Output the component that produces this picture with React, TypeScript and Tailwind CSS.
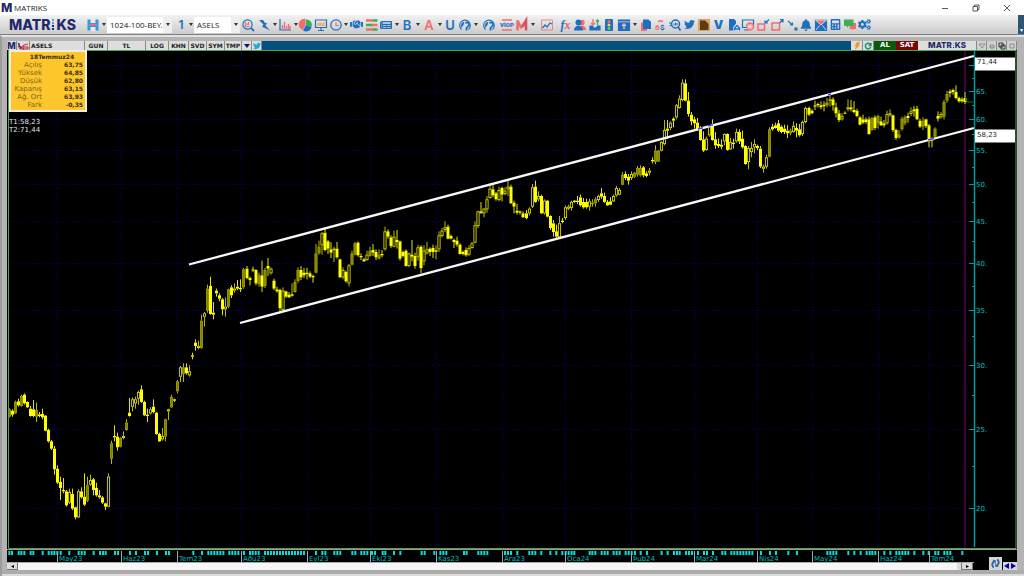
import type { ReactNode } from 'react'
import { FaTwitter, FaHandshake, FaBell, FaCalculator, FaNewspaper, FaCogs } from 'react-icons/fa'

const BLUE = '#1f6fc0'
const RED = '#f26d6d'
const GREEN = '#2fb457'
const NAVY = '#23286b'

// each bar: high, body top, body bottom, low, style (f = filled, h = hollow, d = dim)
// values are in thirds of a unit below the segment's base line
const segments = [
  {
    base: 380,
    bars:
      '85 88 110 112 d,88 92 104 110 f,62 66 100 102 d,56 64 76 80 f,44 48 78 80 d,40 44 70 74 f,64 66 82 84 f,78 86 108 110 f,60 88 108 112 f,68 90 110 126 d,96 103 108 112 f,86 102 112 118 f,105 107 152 154 f,146 150 184 188 f,180 184 206 210 f,198 206 268 284 f,256 266 308 312 f,290 306 324 360 f,294 330 334 340 f,330 334 376 380 f,326 336 368 372 h,326 342 386 390 f,380 382 412 418 f,328 334 412 414 h,322 334 352 356 f,280 350 374 378 f,290 316 362 366 d,284 300 314 318 h,294 298 330 346 f,308 324 346 350 f,330 346 352 356 f,348 352 368 372 f,368 370 380 390 f,280 290 380 382 h,182 190 236 252 d,136 168 172 184 f,158 170 202 212 f,172 174 200 202 d,154 168 174 178 h,118 128 150 152 d,54 98 108 110 f,52 58 80 94 h,50 58 70 86 h,32 36 56 74 h,16 28 66 68 f,62 66 106 108 f,86 104 108 126 f,82 88 100 104 h,58 80 96 100 f,96 98 162 164 f,158 162 184 186 f,144 168 178 182 h,116 118 170 184 d,86 88 94 120 h,44 50 82 84 d,56 58 62 66 f,0 4 34 40 d',
  },
  {
    base: 220,
    bars:
      '438 442 470 486 h,430 442 462 486 d,430 442 460 464 f,436 454 466 470 h,398 406 410 418 f,358 368 378 392 f,362 378 384 388 h,284 302 384 386 d,276 280 290 320 h,194 206 272 278 d,170 198 282 284 f,246 278 284 298 f,206 212 220 230 f,220 226 236 244 f,234 238 268 286 f,232 260 268 290 h,206 208 260 264 d,196 202 226 234 f,190 206 212 218 h,180 200 206 210 f,178 204 208 216 f,144 148 202 206 d,138 146 174 178 f,170 174 180 196 f,140 148 152 156 f,148 150 190 196 f,158 166 192 200 d,122 166 200 216 f,144 150 198 204 d,114 138 146 168 f,142 146 160 164 h,176 182 206 210 f,200 208 214 218 f,206 210 264 274 f,202 212 270 276 h,212 214 230 234 f,216 224 232 234 f,190 222 228 230 h,178 186 216 218 d,142 150 184 188 d,138 150 172 180 f,144 158 166 174 f,144 158 162 178 f,154 160 170 174 f,164 168 172 188 f,72 100 158 160 d,62 80 100 104 d,36 40 76 104 h,26 38 90 94 f,60 64 86 102 f,66 88 98 114 f,80 86 90 126 h,66 86 112 116 f,116 118 172 174 f,142 150 172 178 h,152 156 184 188 f,132 136 190 200 h,92 100 134 136 d,66 70 104 106 d,64 68 106 110 f,100 108 112 120 f,114 118 124 126 f,92 104 120 122 h,80 92 108 110 d,72 90 98 108 f,88 96 112 120 f,88 104 116 118 d,90 102 106 112 f,20 34 88 92 h,28 34 50 56 f,46 52 78 84 f,32 50 80 82 h,30 60 66 86 f,62 64 116 122 f,92 96 108 112 f,88 92 138 140 f,98 100 138 142 h,60 104 110 124 f,98 108 138 146 f,74 82 110 122 h,76 80 144 160 f,76 92 124 136 h,66 88 100 104 h,82 86 96 108 f,74 84 96 114 f,76 90 96 118 h,34 46 88 96 h',
  },
  {
    base: 160,
    bars:
      '204 212 228 232 h,184 202 210 216 h,194 200 236 238 f,224 228 236 238 f,236 240 246 264 f,230 242 254 260 f,250 254 282 284 f,272 276 282 286 f,262 270 286 290 f,256 264 284 288 h,246 250 264 266 h,184 196 248 250 h,152 154 198 204 h,126 154 160 160 f,144 146 160 172 h,108 118 148 158 h,70 86 114 116 h,70 88 106 112 f,96 100 118 122 f,80 90 120 124 h,80 84 104 124 f,82 92 102 106 h,60 80 88 108 h,74 80 130 132 f,122 128 140 160 f,132 152 158 164 f,152 154 158 164 f,154 160 172 174 f,150 160 174 178 f,142 146 160 166 h,72 82 140 144 h,62 80 126 128 f,94 108 118 124 h,104 108 160 162 f,118 122 160 164 h,120 122 170 172 f,166 168 204 210 f,180 190 216 230 f,194 214 230 234 f,168 190 232 234 h,174 182 186 190 f,136 142 174 180 h,134 140 146 150 h,122 126 144 152 h,120 122 126 128 f,108 122 126 132 f,104 112 136 140 f,114 126 142 146 f,116 126 142 146 f,116 124 140 152 h,118 128 132 140 d,112 118 130 140 d,104 108 120 126 h,84 100 110 116 f,98 108 126 128 f,120 126 136 138 f,112 124 134 136 f,104 108 124 126 h,78 84 106 110 h,84 90 104 106 h,36 44 74 76 d,34 42 54 60 f,42 50 62 74 f,34 42 54 60 h,36 38 50 54 d,18 24 44 50 d,16 24 46 50 d,18 22 46 52 f,34 40 48 52 f,24 32 38 46 h',
  },
  {
    base: 70,
    bars:
      '262 270 274 280 f,226 242 276 282 d,240 242 274 276 d,214 216 242 244 h,150 180 222 226 h,150 176 182 206 f,154 158 174 180 h,142 146 152 172 f,102 106 142 148 h,76 86 114 116 h,28 38 90 94 h,28 40 92 94 f,66 92 132 140 f,126 134 154 166 f,140 148 160 176 f,144 158 178 182 f,168 174 210 212 f,184 208 242 246 f,200 206 240 242 h,166 168 196 200 h,148 162 210 212 f,186 208 226 236 f,206 222 228 234 f,208 224 230 238 f,190 192 214 226 h,190 192 240 242 f,204 216 238 240 h,206 218 222 236 f,176 186 214 218 h,178 186 214 222 f,182 206 232 236 f,226 228 282 284 f,228 234 276 298 h,216 234 246 262 h,208 222 232 250 h,224 228 234 240 f,228 236 290 294 f,284 290 296 308 h,254 262 290 296 h,172 178 260 262 d,162 170 178 182 f,158 166 174 176 f,150 160 182 186 f,166 170 186 190 f,164 176 186 192 f,166 182 190 204 f,176 182 190 196 d,154 168 186 188 h,160 174 182 202 f,162 178 196 200 f,152 156 192 198 h,110 114 156 160 h,110 114 134 138 f,118 122 130 132 f,92 106 110 120 f,98 102 106 112 f,94 106 112 118 f,94 104 108 124 f,84 98 106 112 h,74 88 92 110 h,82 88 106 122 f,98 112 130 142 f,120 130 150 156 f,130 138 148 152 h,124 128 130 132 f,88 112 118 124 h,90 112 118 124 f,94 120 126 130 f,116 122 138 142 f,138 142 164 166 f,134 148 158 162 f,142 148 156 162 f,140 148 192 194 f,140 144 180 182 d,136 142 174 180 f,134 138 160 176 d,140 154 166 168 f,150 160 166 172 f,122 132 160 164 h,118 130 136 140 h,134 136 180 186 f,176 180 204 210 f,180 194 202 206 h,140 146 178 182 d,136 142 160 166 d,128 138 144 158 f,112 124 132 138 h,108 118 124 140 f,108 116 148 150 f,146 152 170 174 f,142 152 170 180 d,146 148 168 174 f,162 166 214 232 f,202 206 212 232 f,172 176 200 204 d,124 138 146 154 f,126 132 142 146 h,90 96 140 148 d,62 72 92 98 d,58 64 70 82 f,56 60 66 74 f,46 66 84 88 f,80 84 94 98 f,82 88 94 98 f,66 84 96 102 f',
  },
]

const candles = segments
  .flatMap(s =>
    s.bars.split(',').map(bar => {
      const [high, top, bottom, low, kind] = bar.split(' ')
      const y = (v: string) => s.base + Number(v) / 3
      return { high: y(high), top: y(top), bottom: y(bottom), low: y(low), kind }
    })
  )
  .map((c, i) => ({ ...c, x: (28 + i * 9.016) / 3 }))

// news markers under the chart, thirds of a unit from each start
const markers = [
  { from: 0, at: [28, 36, 56, 64, 73, 92, 100, 128, 146, 155, 163, 172, 182, 208, 236, 245, 254, 281, 300, 309, 317, 345, 354, 390, 408, 435, 444, 471, 498, 507, 580, 606, 625, 634, 643, 652, 661, 670, 688, 697, 706, 715] },
  { from: 240, at: [12, 30, 38, 47, 56, 75, 84, 93, 102, 111, 120, 129, 138, 147, 156, 165, 174, 183, 192, 228, 247, 256, 283, 292, 301, 337, 346, 364, 373, 382, 396, 405, 428, 436, 462, 481, 545, 554, 583, 601, 610, 619, 672, 680, 715, 724, 733, 742, 795, 804, 813, 832, 868, 877, 886, 904, 931, 949, 967] },
  { from: 540, at: [77, 86, 95, 103, 149, 157, 166, 185, 194, 203, 221, 230, 239, 257, 266, 275, 285, 302, 321, 365, 383, 402, 411, 419, 438, 447, 456, 474, 492, 501, 519, 547, 556, 574, 583, 592, 601, 610, 619, 628, 637, 663, 690, 708, 745, 771, 862, 871, 880, 889, 925, 943, 962, 980, 989] },
  { from: 820, at: [157, 166, 193, 211, 229, 238, 247, 256, 265, 283, 310, 326, 346, 355, 373, 382, 391, 427] },
].flatMap(m => m.at.map(v => m.from + v / 3))

const months: [number, string][] = [
  [57, 'May23'], [121, 'Haz23'], [177, 'Tem23'], [241, 'Aðu23'], [307, 'Eyl23'], [370, 'Eki23'], [436, 'Kas23'],
  [502, 'Ara23'], [565, 'Oca24'], [631, 'Þub24'], [694, 'Mar24'], [757, 'Nis24'], [812, 'May24'], [878, 'Haz24'], [929, 'Tem24'],
]

const levels = [70, 65, 60, 55, 50, 45, 40, 35, 30, 25, 20]
const priceY = (p: number) => Math.round(508 - 353.8 * Math.log(p / 20))

const quote = [
  ['Açılış', '63,75'],
  ['Yüksek', '64,85'],
  ['Düşük', '62,80'],
  ['Kapanış', '63,15'],
  ['Ağ. Ort', '63,93'],
  ['Fark', '-0,35'],
]

function Svg({ children }: { children: ReactNode }) {
  return <svg viewBox="0 0 12 12" className="h-3 w-3 overflow-visible" fill="none" stroke={BLUE} strokeWidth="1.2">{children}</svg>
}

function Caret() {
  return <svg viewBox="0 0 4 3" className="h-[3px] w-[4px]" fill="#333"><path d="M0 0h4L2 3z" /></svg>
}

function Glyph({ children, className }: { children: ReactNode; className: string }) {
  return <span className={`font-[Inter,sans-serif] ${className}`}>{children}</span>
}

const globe = (
  <Svg>
    <path d="M2.500 10.500A5.300 5.300 0 1 1 9.500 10.500" strokeWidth="1.200" />
    <path d="M2 8.500C1.500 5 3 3 5.500 2.500 4.500 4 5.500 5.500 4 6.500c-1 .8-.5 2-2 2z" fill={BLUE} stroke="none" />
    <path d="M6.500 4.500c1.500-2 3.500-1 3.500 1S8 7.500 7.500 9v2.500" strokeWidth="1.800" />
  </Svg>
)

const I = 'w-[14px]'
const W = 'w-[15px]'
const caret = { label: 'Menu', w: 'w-[7px]', icon: <Caret /> }

const tools: { label: string; w: string; icon: ReactNode }[] = [
  { label: 'Search', w: `ml-px ${I}`, icon: <Svg><circle cx="5.500" cy="5.500" r="4.600" /><path d="M9 9l3 3" strokeWidth="1.800" /><path d="M3.500 3v4.500h4M5 6V4.500M6.500 6V3" stroke={RED} /></Svg> },
  { label: 'Quick order', w: `ml-px ${W}`, icon: <Svg><path d="M1 1h4l2 3h2L7.500 6.500 12 11.500 6 8.500 4 8l1.500-2.500z" fill={BLUE} stroke="none" /></Svg> },
  caret,
  { label: 'Chart', w: I, icon: <Svg><path d="M1 0v11h11" /><path d="M3.500 10V6M5.500 10V3M7.500 10V7M9.500 10V5M11 10V7" stroke={RED} strokeWidth="1.300" /></Svg> },
  caret,
  { label: 'Portfolio', w: I, icon: <Svg><g stroke="none"><path d="M6 6V.5A5.500 5.500 0 0 1 11.500 8z" fill={GREEN} /><path d="M6 6l5.500 2a5.500 5.500 0 0 1-8.500 3.500z" fill={BLUE} /><path d="M5.500 5.500L3 11A5.500 5.500 0 0 1 5.500 0z" fill={RED} /></g></Svg> },
  { label: 'Screen', w: W, icon: <Svg><path d="M.5 1h11v7.500H.5zM3 11.500h6M6 9v2" /><path d="M3 7V4M5 7V3M7 7V4M9 7V3" stroke="#f0a040" /></Svg> },
  { label: 'Clock', w: W, icon: <Svg><circle cx="6" cy="6" r="5.200" strokeWidth="1.200" /><path d="M6 3v3.500h3" stroke={RED} /></Svg> },
  { ...caret, w: 'w-[6px]' },
  { label: 'Deals', w: W, icon: <FaHandshake size={13} color={BLUE} /> },
  { label: 'Depth', w: W, icon: <Svg><path d="M0 1.500h7M5 6h6.500M0 10.500h7" stroke={RED} strokeWidth="2.600" /><path d="M7 1.500h4.500M0 6h6M7 10.500h4.500" stroke={GREEN} strokeWidth="2.600" /></Svg> },
  { label: 'News', w: I, icon: <FaNewspaper size={12} color={BLUE} /> },
  caret,
  { label: 'Bond', w: I, icon: <Glyph className="text-[13px] font-semibold text-[#1f6fc0]">B</Glyph> },
  caret,
  { label: 'Analysis', w: `ml-px ${I}`, icon: <Glyph className="text-[13px] font-semibold text-[#f26d6d]">A</Glyph> },
  caret,
  { label: 'Fund', w: I, icon: <Glyph className="text-[13px] font-semibold text-[#1f6fc0]">U</Glyph> },
  { label: 'World', w: W, icon: globe },
  caret,
  { label: 'Markets', w: `ml-[3px] ${I}`, icon: globe },
  { label: 'Viop', w: `ml-1 ${I}`, icon: <Svg><path d="M1 1h10M1 11h10" stroke={RED} strokeWidth="1.500" /><text x="6" y="8" textAnchor="middle" fill={BLUE} stroke="none" fontSize="6" fontWeight="900" fontFamily="Roboto, sans-serif">VİOP</text></Svg> },
  { label: 'Matriks', w: `ml-px ${I}`, icon: <Svg><path d="M1.500 11.500V1.500l4 8" stroke={RED} strokeWidth="2.600" /><path d="M6 8l4-6.500v10" stroke="#d9505e" strokeWidth="2.600" /></Svg> },
  caret,
  { label: 'Line chart', w: `ml-1 ${I}`, icon: <Svg><path d="M.5 1h11v10H.5z" stroke={RED} strokeWidth=".8" /><path d="M1.500 9L4 6l2 2 3-4 2 1" /></Svg> },
  { label: 'Formula', w: `ml-1 ${W}`, icon: <span className="font-['Liberation_Serif',serif] text-[12px] font-bold italic text-[#1f6fc0]">f<span className="text-[#e06070]">x</span></span> },
  { label: 'Users', w: I, icon: <Svg><g stroke="none"><circle cx="8" cy="3.500" r="2.700" fill={RED} /><path d="M4 11c0-6 8-6 8 0z" fill={RED} /><circle cx="4.500" cy="3.500" r="3" fill={BLUE} /><path d="M0 11.500C0 5 9 5 9 11.500z" fill={BLUE} /></g></Svg> },
  { label: 'Inbox', w: W, icon: <Svg><path d="M1 7v4h10V7H8.500L7.500 9h-3l-1-2z" fill={BLUE} /><path d="M4 0v6M2 4l2 2 2-2" stroke={RED} strokeWidth="1.300" /><path d="M8.500 6V1M7 2.500L8.500 1 10 2.500" stroke={GREEN} strokeWidth="1.300" /></Svg> },
  { label: 'Signals', w: I, icon: <Svg><g stroke="none"><rect x="2" y="0" width="8" height="12" rx="1" fill={BLUE} /><circle cx="6" cy="2.500" r="1.500" fill={RED} /><circle cx="6" cy="6" r="1.500" fill="#f5d742" /><circle cx="6" cy="9.500" r="1.500" fill="#5bd45b" /></g></Svg> },
  { label: 'Upload', w: W, icon: <Svg><path d="M.5 1h11v10.500H.5z" fill={BLUE} /><path d="M0 2.800h12" stroke="#dfe8f2" strokeWidth=".7" /><path d="M6 10V5M4 7l2-2 2 2" stroke="#ffb0b0" strokeWidth="1.500" /></Svg> },
  caret,
  { label: 'Copy', w: W, icon: <Svg><path d="M1 3.500h6V12H1z" fill={RED} stroke="none" /><path d="M3 .5h5.500L11 3v7H3z" fill={BLUE} stroke="none" /></Svg> },
  { label: 'Currency', w: I, icon: <Svg><g stroke="none" fontFamily="Roboto, sans-serif" fontWeight="700" fontSize="8"><text x="1" y="10.500" fill={RED}>6</text><text x="6" y="11" fill={BLUE}>$</text></g><path d="M4 3c2-2 4-1 5 0" stroke={RED} /></Svg> },
  { label: 'Find symbol', w: W, icon: <Svg><circle cx="6.500" cy="5" r="4" strokeWidth="1.500" /><path d="M9 8l2.500 3.500" strokeWidth="1.800" /><path d="M5 6.500V4.500M6.500 6.500v-3M8 6.500V4M0 4h2M.5 6.500h2" strokeWidth="1" /></Svg> },
  { label: 'Twitter', w: I, icon: <FaTwitter size={11} color={BLUE} /> },
  { label: 'Gold', w: W, icon: <Svg><path d="M0 0h12v12H0z" fill="#d6a75c" stroke="none" /><path d="M2 1.500h5L10.500 5v6H2z" fill="#5c3b16" stroke="none" /></Svg> },
  { label: 'Volume', w: W, icon: <Glyph className="text-[12px] font-black text-[#1f6fc0]">V</Glyph> },
  { label: 'Report', w: W, icon: <Svg><path d="M1 0h5l2 2v9.500H1z" fill={BLUE} stroke="none" /><path d="M6.500 12V8.500l2-2.500 2.500 2.500V12M7 10h4" stroke="#e8f0f8" strokeWidth="2.500" /><path d="M6.500 11.500V9L9 6.500 11.500 9v2.500M6.500 10h5" strokeWidth="1.300" /></Svg> },
  { label: 'Stop', w: I, icon: <Svg><path d="M.5 1h11v7.500H.5zM2 11h4" /><circle cx="8" cy="7.500" r="3.500" fill="#f9b0b0" stroke={RED} strokeWidth="1.300" /><path d="M6.500 7.500h3" stroke="#fff" strokeWidth="1.200" /></Svg> },
  { label: 'Shrink', w: W, icon: <Svg><path d="M1 5h6.500v6H1z" stroke={RED} strokeWidth="1.500" /><path d="M12 .5L8 4M8 1.500V4h3" /></Svg> },
  { label: 'Expand', w: I, icon: <Svg><path d="M1 4h7.500v7H1z" stroke={RED} strokeWidth="1.500" /><path d="M8.500 4L12 .5M9 .5h3v3" /></Svg> },
  { label: 'Move', w: W, icon: <Svg><path d="M2 2l4.500 4M6.500 3.500V6H4" /><path d="M8.500 8.500h3v3h-3z" fill={BLUE} stroke="none" /></Svg> },
  { label: 'Alarm', w: I, icon: <FaBell size={12} color={BLUE} /> },
  { label: 'Mail', w: W, icon: <Svg><path d="M.5 1h11v10.500H.5z" fill={BLUE} /><path d="M.5 1h11L6 6z" fill={RED} stroke="#eef" strokeWidth=".8" /><path d="M1 11l3.500-4.500M11 11L7.500 6.500" stroke="#eef" strokeWidth=".8" /></Svg> },
  { label: 'Calculator', w: I, icon: <FaCalculator size={11} color={BLUE} /> },
  { label: 'Chat', w: W, icon: <Svg><path d="M5.500 4H12v6h-2l-1.500 2V10h-3z" fill={RED} stroke="none" /><path d="M0 .5h9.500v6.500H4.500L3 9V7H0z" fill="#3fae55" stroke="none" /></Svg> },
  { label: 'Settings', w: W, icon: <FaCogs size={13} color={BLUE} /> },
]

function Logo({ small = false }: { small?: boolean }) {
  const dot = small ? 'h-px w-px' : 'h-[2px] w-[2px]'
  return (
    <span className={`flex items-center font-[Inter,sans-serif] font-extrabold text-[#23286b] ${small ? 'gap-px text-[8px] leading-[9px]' : 'gap-[2px] text-[14px] leading-4'}`}>
      MATR
      <span className="flex flex-col gap-px">
        <i className={`${dot} bg-[#4aa3df]`} />
        <i className={`${dot} bg-[#4aa3df]`} />
        <i className={`${dot} bg-[#23286b]`} />
        {!small && <i className={`${dot} bg-[#23286b]`} />}
      </span>
      KS
    </span>
  )
}

const tabs: [string, string][] = [
  ['GUN', 'w-[23px]'], ['TL', 'w-[38px]'], ['LOG', 'w-[23px]'], ['KHN', 'w-[20px]'], ['SVD', 'w-[18px]'], ['SYM', 'w-[18px]'], ['TMP', 'w-[17px]'],
]
const tab = 'flex h-full shrink-0 items-center justify-center border-r border-[#8a8a8a] bg-[#dedede]'

function TitleBar() {
  return (
    <header className="flex h-[15px] shrink-0 items-center bg-white pl-px">
      <Glyph className="w-[13px] text-[12px] leading-none font-extrabold text-[#23286b]">M</Glyph>
      <h1 className="flex-1 text-[8px] leading-none text-[#222]">MATRIKS</h1>
      <button aria-label="Minimize" className="flex w-[31px] justify-center"><svg className="h-2 w-2" viewBox="0 0 8 8" stroke="#333" strokeWidth=".8"><path d="M1 4.500h6" /></svg></button>
      <button aria-label="Restore" className="flex w-[31px] justify-center"><svg className="h-2 w-2" viewBox="0 0 8 8" fill="none" stroke="#333" strokeWidth=".8"><path d="M1 2.500h4.500V7H1zM2.500 2.500V1H7v4.500H5.500" /></svg></button>
      <button aria-label="Close" className="mr-[2px] flex w-[31px] justify-center"><svg className="h-2 w-2" viewBox="0 0 8 8" stroke="#333" strokeWidth=".8"><path d="M1 1l6 6M7 1L1 7" /></svg></button>
    </header>
  )
}

function Combo({ label, value, className }: { label: string; value: string; className: string }) {
  return (
    <div className={`relative flex h-4 shrink-0 bg-white ${className}`}>
      <select aria-label={label} className="block h-4 w-full appearance-none overflow-hidden bg-transparent pr-[10px] pl-[3px] text-[8px] leading-4 text-[#222]">
        <option>{value}</option>
      </select>
      <span className="pointer-events-none absolute inset-y-0 right-0 flex w-[9px] items-center justify-center bg-[#eee]"><Caret /></span>
    </div>
  )
}

function Toolbar() {
  return (
    <nav className="flex h-5 shrink-0 items-stretch border-b border-[#808080] bg-linear-to-b from-[#f2f2f2] to-[#cbcbcb]">
      <div className="flex min-w-0 flex-1 items-center overflow-hidden pl-[9px]">
        <div className="w-[77px] shrink-0"><Logo /></div>
        <button aria-label="Save" className="flex w-[14px] shrink-0 justify-center">
          <Svg><path d="M.5.5h11v11H.5z" fill="#2d9be0" stroke="none" /><path d="M3.500 0h5v4H3.500z" fill="#f3e4e4" stroke="none" /><path d="M3.500 8h5v4H3.500z" fill="#f3e4e4" stroke="none" /><path d="M2 5.800h8" stroke={RED} strokeWidth="1.800" /></Svg>
        </button>
        <button aria-label="Save menu" className="flex w-[7px] shrink-0 justify-center"><Caret /></button>
        <Combo label="Workspace" value="1024-100-BEYAZ" className="w-[65px]" />
        <button aria-label="Page" className="ml-[2px] flex w-[14px] shrink-0 justify-center"><Glyph className="text-[12px] leading-4 font-semibold text-[#1f6fc0]">1</Glyph></button>
        <button aria-label="Page menu" className="flex w-[6px] shrink-0 justify-center"><Caret /></button>
        <Combo label="Symbol" value="ASELS" className="w-[46px]" />
        {tools.map((t, i) => (
          <button key={i} aria-label={t.label} className={`flex h-4 shrink-0 items-center justify-center leading-4 ${t.w}`}>{t.icon}</button>
        ))}
      </div>
      <div className="flex w-[6px] items-end justify-center bg-[#2c5674] text-[6px] leading-[8px] text-white">▾</div>
    </nav>
  )
}

function ChartHeader() {
  return (
    <div className="flex h-[9px] shrink-0 items-stretch overflow-hidden bg-[#04507f] font-['DejaVu_Sans',sans-serif] text-[6px] leading-[9px] font-bold text-[#222]">
      <div className={`w-[10px] ${tab}`}><Glyph className="text-[9px] font-extrabold text-[#23286b]">M</Glyph></div>
      <div className={`w-[13px] ${tab}`}>
        <svg viewBox="0 0 12 8" className="h-2 w-3" fill="none"><path d="M1 1l3 5 3-3 4-1" stroke="#d33" strokeWidth="1.200" /><path d="M6 5h5v2H6zM1 4l2 3h4" stroke="#b02030" /><path d="M2 1v3l3 2" stroke={NAVY} /></svg>
      </div>
      <div className="flex w-[55px] shrink-0 items-center border-r border-[#8a8a8a] bg-[#dedede] pl-px">ASELS</div>
      {tabs.map(([name, w]) => <button key={name} className={`${tab} ${w}`}>{name}</button>)}
      <button aria-label="More" className={`w-[10px] ${tab}`}><svg viewBox="0 0 6 4" className="h-1 w-[6px]" fill="#14145a"><path d="M0 0h6L3 4z" /></svg></button>
      <button aria-label="Share" className={`w-[10px] ${tab}`}><FaTwitter size={8} color="#2aa9e0" /></button>
      <div className="flex-1" />
      <button aria-label="Quick trade" className={`w-[12px] ${tab}`}><svg viewBox="0 0 8 8" className="h-2 w-2"><path d="M4 0h3L5.500 3H7L2 8l1-3.500H1.500z" fill="#f09a1a" /></svg></button>
      <button aria-label="Refresh" className={`w-[11px] ${tab}`}><svg viewBox="0 0 8 8" className="h-2 w-2" fill="none" stroke="#12906c" strokeWidth="1.400"><path d="M6.500 2.500A2.800 2.800 0 1 0 6.800 5M7 1v2.500H4.500" /></svg></button>
      <button className="w-[22px] bg-[#0b5a0b] text-[7px] text-white">AL</button>
      <button className="w-[22px] bg-[#780808] text-[7px] text-white">SAT</button>
      <div className={`w-[59px] ${tab}`}><Logo small /></div>
      {['M1 2h6L4 6z', 'M2 3h4v3H2zM2 5h4', 'M1 1h4v4H1zM3 3h4v4H3z', 'M2 2h4v4H2z'].map((d, i) => (
        <button key={i} aria-label={`Window ${i + 1}`} className="flex max-w-[10px] flex-1 items-center justify-center border-r border-[#8a8a8a] bg-[#d0d0d0]">
          <svg viewBox="0 0 8 8" className="h-2 w-2" fill="none" stroke={i === 2 ? '#222' : '#888'} strokeWidth=".9"><path d={d} /></svg>
        </button>
      ))}
    </div>
  )
}

function Chart() {
  return (
    <svg viewBox="7 50 1010 513" preserveAspectRatio="none" className="absolute inset-0 h-full w-full bg-black font-['DejaVu_Sans',sans-serif]">
      <g stroke="#00004c" strokeDasharray="3 2" shapeRendering="crispEdges">
        {levels.map(p => <path key={p} d={`M12 ${priceY(p) + 0.5}H974`} />)}
        {months.map(([x]) => <path key={x} d={`M${x + 0.5} 52V547`} />)}
      </g>
      <path d="M965 51V548" stroke="#3c003c" strokeWidth="2" />

      {candles.map(c => {
        const x = Math.round(c.x * 2) / 2
        const h = Math.max(c.bottom - c.top, 1)
        const wick = c.kind === 'f' ? '#e4e400' : '#b8b800'
        return (
          <g key={c.x}>
            <path d={`M${x} ${c.high}V${c.top}M${x} ${c.bottom}V${c.low}`} stroke={wick} />
            {c.kind === 'f' && <rect x={x - 1.5} y={c.top} width="3" height={h} fill="#ffff00" />}
            {c.kind === 'h' && <rect x={x - 1.1} y={c.top + 0.4} width="2.200" height={Math.max(h - 0.8, 0.6)} fill="#000" stroke="#dada00" strokeWidth=".9" />}
            {c.kind === 'd' && <rect x={x - 1.1} y={c.top + 0.4} width="2.200" height={Math.max(h - 0.8, 0.6)} fill="#808000" stroke="#a6a600" strokeWidth=".8" />}
          </g>
        )
      })}

      <g stroke="#f8f8f8" strokeWidth="2.300">
        <path d="M189 264.500L974 56" />
        <path d="M240 323L974 128" />
      </g>
      <path d="M928 140l6-1.500M698 129l5-1.300M708 126l5-1.300M828 95l3-1" stroke="#4040ff" strokeWidth="1.500" />
      <path d="M965.500 92V101" stroke="#2a8a4a" />
      <path d="M966 102H973" stroke="#007800" />

      <g stroke="#009a9a">
        <path d="M974.500 51V547" strokeWidth="1.500" />
        {levels.map(p => <path key={p} d={`M969 ${priceY(p) + 0.5}H975`} />)}
        {levels.slice(0, -1).map(p => <path key={p} d={`M972 ${priceY(p - 2.5) + 0.5}H975`} />)}
      </g>
      <g fill="#00c4c4" fontSize="7">
        {levels.slice(1).map(p => <text key={p} x="976" y={priceY(p) + 3}>{p}.</text>)}
      </g>
      <path d="M975 57.500h40v13h-40zM975 129.500h40v13h-40z" fill="#fff" />
      <g fill="#222" fontSize="7">
        <text x="977" y="64">71,44</text>
        <text x="977" y="137">58,23</text>
      </g>

      <path d="M8.500 548.500V50.500H1016V548.500z" fill="none" stroke="#4ca44c" />
      <path d="M7 549.500H1017" stroke="#9a9a9a" />
      {markers.map(x => <rect key={x} x={x - 1} y="551" width="2" height="4" fill="#00e0e0" />)}
      <g stroke="#a8a8a8">
        {months.map(([x]) => <path key={x} d={`M${x + 0.5} 551V562`} />)}
        <path d="M7 562.500H974" />
      </g>
      <g fill="#00bcbc" fontSize="7">
        {months.map(([x, name]) => <text key={x} x={x + 2} y="561">{name}</text>)}
      </g>
    </svg>
  )
}

function QuotePanel() {
  return (
    <div className="absolute top-0 left-[2px] w-[78px] font-['DejaVu_Sans',sans-serif]">
      <table className="w-full border-2 border-[#f0ece0] bg-[#fdc62c] text-[#3a2f08]">
        <caption className="absolute top-[3px] right-0 left-2 text-center text-[6px] leading-2 font-bold">18Temmuz24</caption>
        <tbody className="block pt-[9px] pb-px">
          {quote.map(([name, value]) => (
            <tr key={name} className="flex h-2 leading-2">
              <th className="w-[31px] text-right text-[7px] font-normal text-[#7d651c]">{name}</th>
              <td className="flex-1 pr-[2px] text-right text-[6px] font-bold">{value}</td>
            </tr>
          ))}
        </tbody>
      </table>
      <p className="mt-[6px] text-[7px] leading-2 text-[#e4e4e4]">T1:58,23<br />T2:71,44</p>
    </div>
  )
}

export default function App() {
  return (
    <div className="flex h-screen flex-col bg-[#b4b4b4] font-['Open_Sans',sans-serif]">
      <TitleBar />
      <Toolbar />
      <main className="flex min-h-0 flex-1 flex-col border-t-2 border-l-2 border-t-[#e2e2e2] border-l-[#9c9c9c] bg-[#b4b4b4] pt-1 pr-[7px] pl-[5px]">
        <ChartHeader />
        <div className="relative min-h-0 flex-1">
          <Chart />
          <QuotePanel />
        </div>
        <div className="relative flex h-[7px] shrink-0 bg-black">
          <button aria-label="Scroll left" className="flex w-[11px] items-center justify-center border-r border-b border-[#777] bg-[#dcdcdc]"><svg viewBox="0 0 4 4" className="h-[3px] w-[3px]"><path d="M4 0v4L0 2z" /></svg></button>
          <div className="flex-1 bg-[#f6f6f6]" />
          <button aria-label="Scroll thumb" className="w-[5px] border-r border-[#777] bg-[#dcdcdc]" />
          <button aria-label="Scroll right" className="mr-[44px] flex w-[11px] items-center justify-center border-r border-b border-[#777] bg-[#dcdcdc]"><svg viewBox="0 0 4 4" className="h-[3px] w-[3px]"><path d="M0 0v4l4-2z" /></svg></button>
          <div className="absolute right-0 bottom-0 flex items-end">
            <button aria-label="Reload" className="mr-px flex h-[13px] w-[13px] items-center justify-center bg-[#d6d6d6]">
              <svg viewBox="0 0 12 12" className="h-[11px] w-[11px]" fill="none" stroke="#2a62a8" strokeWidth="2"><path d="M4 10.500C1.500 8 2 5 5.500 3M8 1.500C10.500 4 10 7 6.500 9" /><path d="M3 2.500l3 .5-.5 3M9 9.500L6 9l.5-3" strokeWidth="1" /></svg>
            </button>
            <button aria-label="Previous" className="flex h-2 w-[7px] items-center justify-center bg-[#d6d6d6]"><svg viewBox="0 0 5 6" className="h-[6px] w-[5px]" fill="#0000a8"><path d="M5 0v6L0 3z" /></svg></button>
            <button aria-label="Next" className="flex h-2 w-[7px] items-center justify-center bg-[#d6d6d6]"><svg viewBox="0 0 5 6" className="h-[6px] w-[5px]" fill="#0000a8"><path d="M0 0v6l5-3z" /></svg></button>
          </div>
        </div>
        <div className="-mr-[7px] -ml-[5px] h-[6px] shrink-0 border-b-2 border-[#dcdcdc] bg-[#acacac]" />
      </main>
    </div>
  )
}
